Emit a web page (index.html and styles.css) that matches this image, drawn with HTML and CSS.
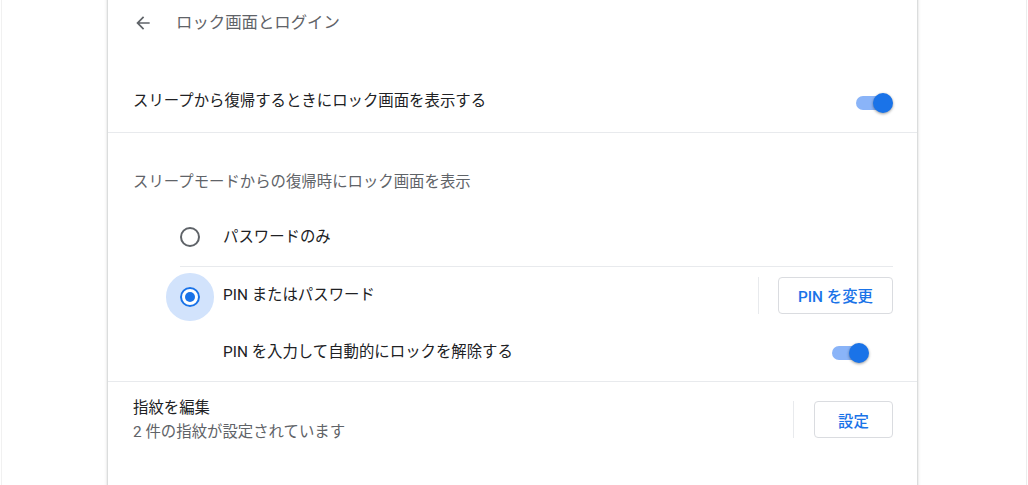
FILE: index.html
```html
<!DOCTYPE html>
<html lang="ja">

<head>
  <meta charset="UTF-8">
  <meta name="viewport" content="width=device-width, initial-scale=1">
  <title>ロック画面とログイン</title>
  <link rel="stylesheet" href="styles.css">
</head>

<body>

  <div class="page">
    <div class="card">

      <div class="header">
        <button class="back-btn" aria-label="戻る">
          <svg viewBox="0 0 24 24" width="20" height="20">
            <path d="M20 11H7.83l5.59-5.59L12 4l-8 8 8 8 1.41-1.41L7.83 13H20v-2z" fill="#5f6368"/>
          </svg>
        </button>
        <h1 class="title">ロック画面とログイン</h1>
      </div>

      <div class="row row-main">
        <span class="label">スリープから復帰するときにロック画面を表示する</span>
        <div class="toggle on"><span class="knob"></span></div>
      </div>

      <div class="section">
        <div class="section-title">スリープモードからの復帰時にロック画面を表示</div>

        <div class="radio-list">
          <div class="radio-row divided">
            <span class="radio"></span>
            <span class="label">パスワードのみ</span>
          </div>

          <div class="radio-row">
            <span class="radio checked"></span>
            <span class="label grow">PIN またはパスワード</span>
            <span class="separator"></span>
            <button class="btn">PIN を変更</button>
          </div>

          <div class="radio-row sub-row">
            <span class="label grow">PIN を入力して自動的にロックを解除する</span>
            <div class="toggle on"><span class="knob"></span></div>
          </div>
        </div>
      </div>

      <div class="row row-finger">
        <div class="grow">
          <div class="label">指紋を編集</div>
          <div class="secondary">2 件の指紋が設定されています</div>
        </div>
        <span class="separator"></span>
        <button class="btn btn-narrow">設定</button>
      </div>

    </div>
  </div>

</body>

</html>
```

FILE: styles.css
```css
* {
  margin: 0;
  padding: 0;
  box-sizing: border-box;
}

body {
  background: #fff;
  color: #202124;
  font-family: Roboto, 'Noto Sans CJK JP', sans-serif;
  font-size: 15.4px;
  height: 485px;
  overflow: hidden;
}

.page {
  display: flow-root;
  height: 100%;
  margin: 0 1px;
  border-left: 1px solid #f1f1f1;
  border-right: 1px solid #ececec;
  padding-left: 106px;
}

.card {
  width: 809px;
  min-height: 520px;
  margin-top: -10px;
  background: #fff;
  box-shadow: 0 1px 2px 0 rgba(60, 64, 67, 0.3), 0 1px 3px 1px rgba(60, 64, 67, 0.15);
}

.header {
  display: flex;
  align-items: center;
  height: 52px;
  padding: 10px 0 0 24px;
}

.back-btn {
  display: flex;
  align-items: center;
  justify-content: center;
  width: 22px;
  height: 22px;
  margin-top: 4px;
  border: none;
  background: none;
  cursor: pointer;
}

.title {
  margin-left: 22px;
  font-size: 16.4px;
  font-weight: 400;
  color: #5f6368;
}

.row {
  display: flex;
  align-items: center;
  padding: 0 24px 0 25px;
}

.row-main {
  height: 61px;
  margin-top: 30px;
  border-bottom: 1px solid #e8eaed;
}

.label {
  color: #202124;
  line-height: 22px;
}

.grow {
  flex: 1;
}

.row-main .label {
  flex: 1;
  margin-top: -2px;
}

/* toggle */
.toggle {
  position: relative;
  width: 37px;
  height: 20px;
  cursor: pointer;
}

.toggle::before {
  content: '';
  position: absolute;
  left: 0;
  top: 3px;
  width: 32px;
  height: 14px;
  border-radius: 7px;
  background: #bdc1c6;
}

.toggle .knob {
  position: absolute;
  left: 0;
  top: 0;
  width: 20px;
  height: 20px;
  border-radius: 50%;
  background: #fff;
  box-shadow: 0 1px 3px rgba(0, 0, 0, 0.4);
}

.toggle.on::before {
  background: #8ab4f8;
}

.toggle.on .knob {
  left: 17px;
  background: #1a73e8;
}

.row-main .toggle {
  margin-top: 2px;
}

.section-title {
  padding: 38px 0 0 25px;
  line-height: 22px;
  color: #5f6368;
}

.radio-list {
  margin: 16px 24px 0 72px;
}

.radio-row {
  display: flex;
  align-items: center;
  height: 56px;
}

.radio-row.divided {
  height: 58px;
  padding-bottom: 1px;
  border-bottom: 1px solid #e8eaed;
}

.radio-row .label {
  margin-left: 23px;
}

.sub-row {
  height: 58px;
  padding-left: 20px;
  padding-right: 24px;
}

.sub-row .toggle {
  margin-top: 2px;
}

.radio {
  position: relative;
  flex: none;
  width: 20px;
  height: 20px;
  border: 2px solid #5f6368;
  border-radius: 50%;
}

.radio.checked {
  border-color: #1a73e8;
  margin-top: 3px;
  box-shadow: 0 0 0 14px #d2e3fc;
}

.radio.checked::after {
  content: '';
  position: absolute;
  left: 3px;
  top: 3px;
  width: 10px;
  height: 10px;
  border-radius: 50%;
  background: #1a73e8;
}

.separator {
  width: 1px;
  height: 37px;
  margin-right: 19px;
  background: #e8eaed;
}

.btn {
  height: 37px;
  padding: 0 19px;
  border: 1px solid #dadce0;
  border-radius: 4px;
  background: #fff;
  color: #1a73e8;
  font-family: inherit;
  font-size: 15.4px;
  font-weight: 500;
  cursor: pointer;
}

.btn-narrow {
  width: 79px;
  padding: 0;
}

.row-finger {
  height: 78px;
  border-top: 1px solid #e8eaed;
  padding-bottom: 2px;
}

.row-finger .label,
.row-finger .secondary {
  line-height: 24px;
}

.secondary {
  color: #5f6368;
}

.row-finger .separator {
  margin-right: 20px;
}
```
